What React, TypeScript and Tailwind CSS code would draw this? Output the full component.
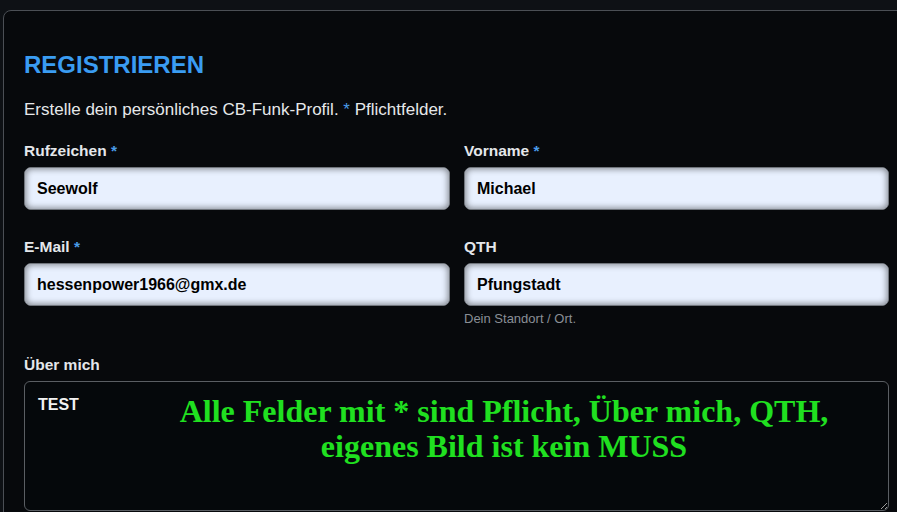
export default function App() {
  const inputCls =
    "w-full h-[43px] rounded-[7px] border border-[#70757c] bg-[#e8f0fe] px-[12px] text-[16px] font-bold text-black shadow-[inset_0_0_6px_1px_rgba(0,0,0,0.45)] outline-none";
  const labelCls = "block mb-[6px] text-[15.5px] leading-[20px] font-bold text-[#e4e7eb]";

  return (
    <div className="h-[512px] w-[897px] overflow-hidden bg-[#0e1115] pt-[10px] pl-[3px] font-['Liberation_Sans',Arial,sans-serif]">
      {/* Panel */}
      <div className="w-[907px] h-[560px] rounded-[8px] border border-[#4b4f55] bg-[#07090c] pt-[38px] px-[20px]">
        <h2 className="text-[24px] leading-[32px] font-bold text-[#3a9cf2]">REGISTRIEREN</h2>
        <p className="mt-[17px] text-[17px] leading-[24px] text-[#e6e8ea]">
          Erstelle dein persönliches CB-Funk-Profil. <span className="text-[#4a9be8]">*</span> Pflichtfelder.
        </p>

        <div className="mt-[19px] grid grid-cols-[426px_425px] gap-x-[14px] gap-y-[27px]">
          <div>
            <label className={labelCls}>
              Rufzeichen <span className="text-[#4a9be8]">*</span>
            </label>
            <input className={inputCls} value="Seewolf" readOnly />
          </div>
          <div>
            <label className={labelCls}>
              Vorname <span className="text-[#4a9be8]">*</span>
            </label>
            <input className={inputCls} value="Michael" readOnly />
          </div>
          <div>
            <label className={labelCls}>
              E-Mail <span className="text-[#4a9be8]">*</span>
            </label>
            <input className={inputCls} value="hessenpower1966@gmx.de" readOnly />
          </div>
          <div>
            <label className={labelCls}>QTH</label>
            <input className={inputCls} value="Pfungstadt" readOnly />
            <div className="mt-[4px] text-[13px] leading-[18px] text-[#8a8f96]">Dein Standort / Ort.</div>
          </div>
        </div>

        <div className="mt-[27px] w-[865px]">
          <label className={labelCls}>Über mich</label>
          <div className="relative">
            <textarea
              className="block w-full h-[130px] rounded-[6px] border border-[#5a5e63] bg-[#05080b] px-[13px] py-[11px] text-[16px] font-bold text-[#f2f2f2] outline-none"
              defaultValue="TEST"
              readOnly
            />
            {/* Annotation overlay */}
            <div className="pointer-events-none absolute left-[95px] right-0 top-[13px] text-center font-['Liberation_Serif',serif] text-[32px] leading-[35px] font-bold text-[#20e020]">
              Alle Felder mit * sind Pflicht, Über mich, QTH,
              <br />
              eigenes Bild ist kein MUSS
            </div>
          </div>
        </div>
      </div>
    </div>
  );
}
